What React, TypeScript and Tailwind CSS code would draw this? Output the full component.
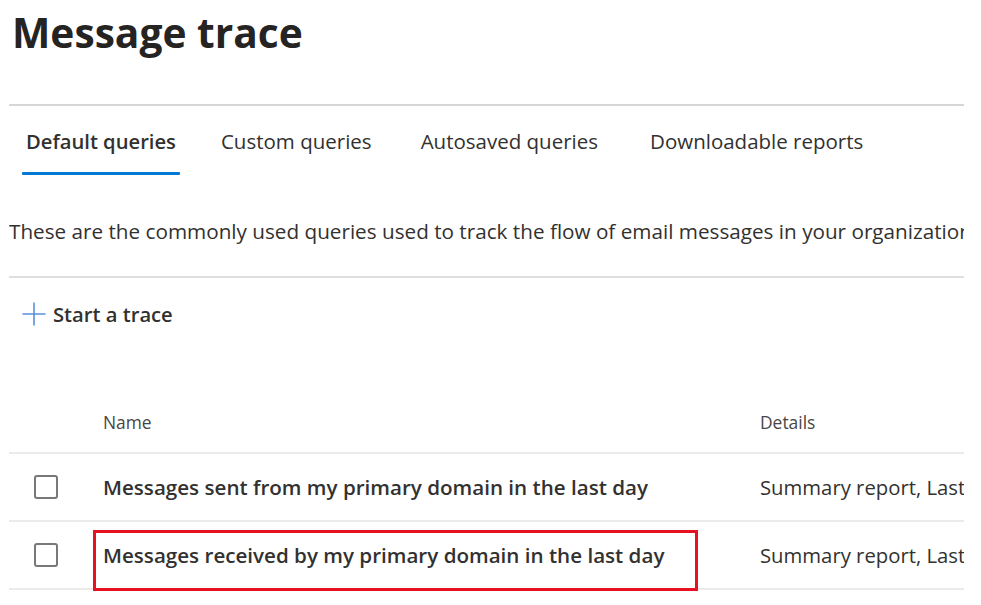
import React from "react";

const font = { fontFamily: '"Segoe UI", "Open Sans", "Noto Sans", sans-serif' };

function Checkbox() {
  return <div className="h-[24px] w-[24px] rounded-[3px] border-[2px] border-[#7a7876] bg-white" />;
}

export default function App() {
  return (
    <div className="h-[605px] w-[981px] bg-white text-[#323130]" style={font}>
      <div className="ml-[9px] h-[605px] w-[955px] overflow-hidden whitespace-nowrap">
        <h1 className="pl-[3px] pt-[4px] text-[40.7px] font-bold leading-[56px] text-[#252423]">Message trace</h1>
        <div className="mt-[44px] h-[2px] bg-[#d6d6d6]" />
        <div className="flex pl-[13px] pt-[20px]">
          <div className="flex shrink-0 flex-col items-center">
            <span className="px-[4px] text-[20.2px] font-semibold leading-[30px]">Default queries</span>
            <div className="mt-[16px] h-[3px] w-full rounded-[1px] bg-[#0078d4]" />
          </div>
          <span className="ml-[41px] shrink-0 text-[20.5px] leading-[30px]">Custom queries</span>
          <span className="ml-[49px] shrink-0 text-[20.5px] leading-[30px]">Autosaved queries</span>
          <span className="ml-[52px] shrink-0 text-[20.5px] leading-[30px]">Downloadable reports</span>
        </div>
        <p className="mt-[41px] text-[20.7px] leading-[30px]">
          These are the commonly used queries used to track the flow of email messages in your organization, like messages sent or received in the last day.
        </p>
        <div className="mt-[30px] h-[2px] bg-[#e1dfdd]" />
        <div className="mt-[24px] flex items-center pl-[13px]">
          <svg width="24" height="24" viewBox="0 0 24 24" className="shrink-0">
            <path d="M12 0.5V23.5M0.5 12H23.5" stroke="#5b8fd9" strokeWidth="1.6" fill="none" />
          </svg>
          <span className="ml-[7px] text-[20.2px] font-semibold leading-[24px]">Start a trace</span>
        </div>
        <div className="relative mt-[64px]">
          <div className="flex h-[64px] items-end border-b-[2px] border-[#edebe9] pb-[18px] text-[17.4px] leading-[24px] text-[#484644]">
            <span className="ml-[94px] w-[657px] shrink-0">Name</span>
            <span className="shrink-0">Details</span>
          </div>
          <div className="flex h-[68px] items-center border-b-[2px] border-[#edebe9]">
            <div className="ml-[25px] w-[69px] shrink-0"><Checkbox /></div>
            <span className="w-[657px] shrink-0 text-[20.6px] font-semibold">Messages sent from my primary domain in the last day</span>
            <span className="shrink-0 text-[20.3px]">Summary report, Last day</span>
          </div>
          <div className="flex h-[68px] items-center border-b-[2px] border-[#edebe9]">
            <div className="ml-[25px] w-[69px] shrink-0"><Checkbox /></div>
            <span className="w-[657px] shrink-0 text-[20.6px] font-semibold">Messages received by my primary domain in the last day</span>
            <span className="shrink-0 text-[20.3px]">Summary report, Last day</span>
          </div>
          <div className="absolute left-[84px] top-[140px] h-[61px] w-[605px] border-[3px] border-[#e81123]" />
        </div>
      </div>
    </div>
  );
}
